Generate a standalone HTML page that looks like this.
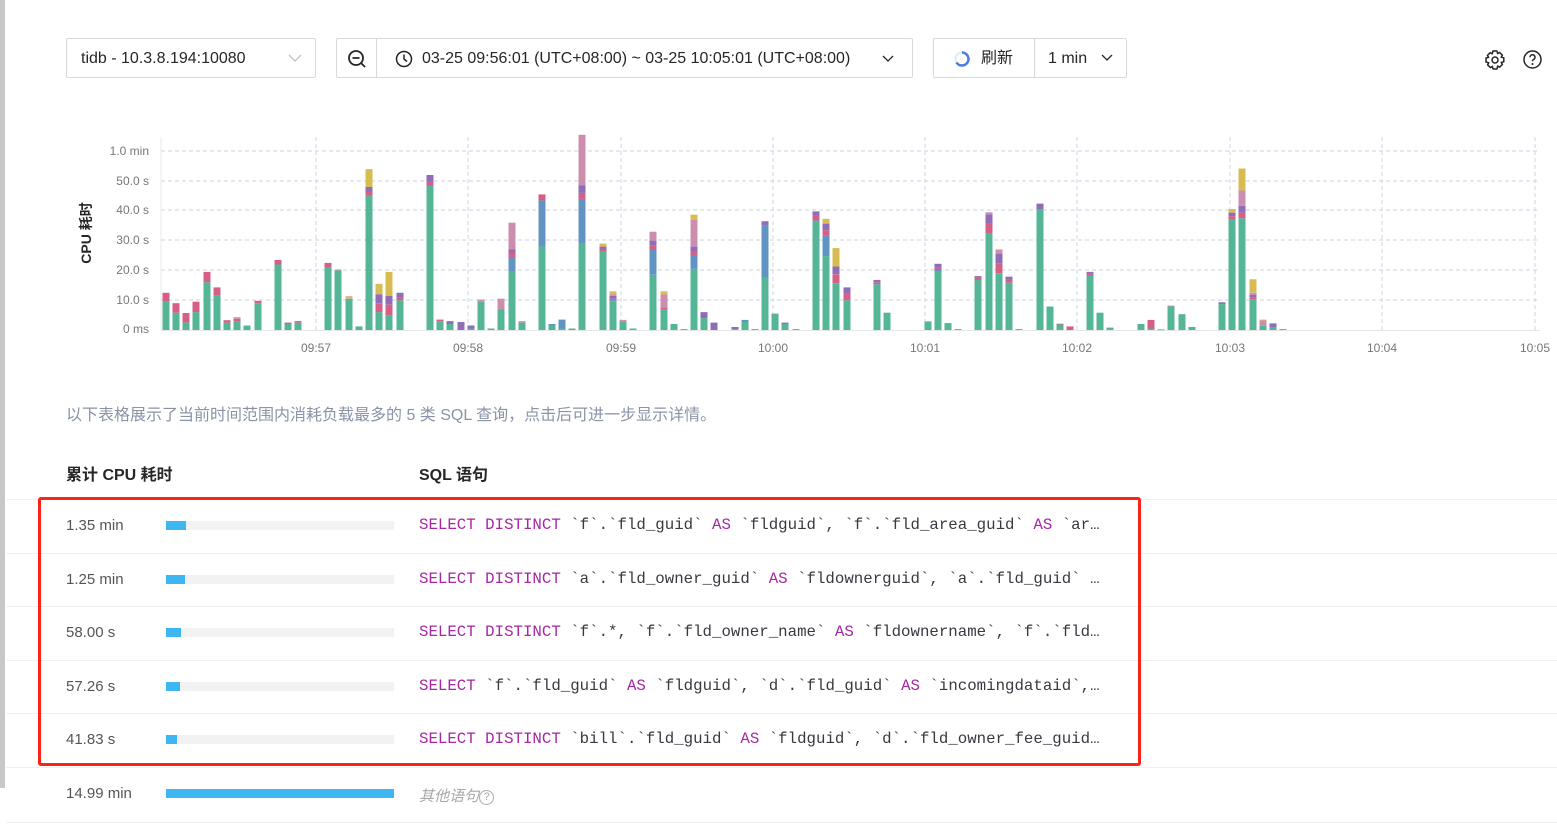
<!DOCTYPE html>
<html><head><meta charset="utf-8"><style>
*{box-sizing:border-box;margin:0;padding:0}
body{width:1557px;height:830px;overflow:hidden;background:#fff;font-family:"Liberation Sans","Noto Sans CJK SC",sans-serif;color:#262626;position:relative}
.abs{position:absolute}
.box{position:absolute;border:1px solid #d9d9d9;border-radius:2px;height:40px;top:38px;background:#fff}
.t16{font-size:16px;line-height:40px;white-space:nowrap}
.lbar{left:0;top:0;width:5px;height:788px;background:#c8c8c8}
.row{position:absolute;left:6px;right:0;height:1px;background:#f0f0f0}
.num{position:absolute;left:66px;font-size:15px;color:#555}
.track{position:absolute;left:166px;width:228px;height:9px;background:#f2f2f2}
.fill{height:9px;background:#3db6f2}
.sql{position:absolute;left:419px;font-family:"Liberation Mono",monospace;font-size:15.75px;color:#383a42;white-space:pre}
.k{color:#a626a4}
</style></head><body>
<div class="abs lbar"></div>

<div class="box" style="left:66px;width:250px">
 <span class="abs t16" style="left:14px;top:0">tidb - 10.3.8.194:10080</span>
 <svg class="abs" style="left:221px;top:14px" width="14" height="10"><path d="M1 2 L7 8 L13 2" fill="none" stroke="#bbb" stroke-width="1.2"/></svg>
</div>
<div class="box" style="left:336px;width:577px">
 <svg class="abs" style="left:9px;top:9px" width="22" height="22"><circle cx="10" cy="10" r="7" fill="none" stroke="#262626" stroke-width="1.8"/><path d="M6.5 10h7M15 15l4 4" stroke="#262626" stroke-width="1.8"/></svg>
 <div class="abs" style="left:39px;top:0;width:1px;height:38px;background:#d9d9d9"></div>
 <svg class="abs" style="left:58px;top:11px" width="18" height="18"><circle cx="9" cy="9" r="7.5" fill="none" stroke="#262626" stroke-width="1.5"/><path d="M9 4.5V9l3 2.5" fill="none" stroke="#262626" stroke-width="1.5"/></svg>
 <span class="abs t16" style="left:85px;top:0">03-25 09:56:01 (UTC+08:00) ~ 03-25 10:05:01 (UTC+08:00)</span>
 <svg class="abs" style="left:545px;top:15px" width="12" height="9"><path d="M1 2 L6 7 L11 2" fill="none" stroke="#262626" stroke-width="1.3"/></svg>
</div>
<div class="box" style="left:933px;width:194px">
 <svg class="abs" style="left:19px;top:11px" width="18" height="18"><circle cx="9" cy="9" r="6.5" fill="none" stroke="#e8ecf5" stroke-width="2.5"/><path d="M9 2.5A6.5 6.5 0 1 1 3.5 12.5" fill="none" stroke="#4a7de0" stroke-width="2.5"/></svg>
 <span class="abs t16" style="left:47px;top:0">刷新</span>
 <div class="abs" style="left:100px;top:0;width:1px;height:38px;background:#d9d9d9"></div>
 <span class="abs t16" style="left:114px;top:0">1 min</span>
 <svg class="abs" style="left:167px;top:14px" width="12" height="9"><path d="M1 2 L6 7 L11 2" fill="none" stroke="#262626" stroke-width="1.3"/></svg>
</div>
<svg class="abs" style="left:1484px;top:49px" width="22" height="22" viewBox="0 0 22 22"><path d="M9 2h4l.6 2.6 2-1.2 2.8 2.8-1.2 2 2.6.6v4l-2.6.6 1.2 2-2.8 2.8-2-1.2L13 20H9l-.6-2.6-2 1.2-2.8-2.8 1.2-2L2 13V9l2.6-.6-1.2-2 2.8-2.8 2 1.2z" fill="none" stroke="#262626" stroke-width="1.5" stroke-linejoin="round"/><circle cx="11" cy="11" r="3" fill="none" stroke="#262626" stroke-width="1.5"/></svg>
<svg class="abs" style="left:1522px;top:49px" width="21" height="21"><circle cx="10.5" cy="10.5" r="8.5" fill="none" stroke="#262626" stroke-width="1.5"/><path d="M8 8.2a2.5 2.5 0 1 1 3.5 2.3c-.8.4-1 .9-1 1.8" fill="none" stroke="#262626" stroke-width="1.5"/><circle cx="10.5" cy="15" r="1" fill="#262626"/></svg>

<svg class="abs" style="left:0;top:0" width="1557" height="370">
 <g stroke="#d6dbe8" stroke-dasharray="4 3" stroke-width="1.2">
  <line x1="161" x2="1540" y1="151" y2="151"/><line x1="161" x2="1540" y1="181" y2="181"/>
  <line x1="161" x2="1540" y1="210" y2="210"/><line x1="161" x2="1540" y1="240" y2="240"/>
  <line x1="161" x2="1540" y1="270" y2="270"/><line x1="161" x2="1540" y1="300" y2="300"/>
  <line x1="316" x2="316" y1="137" y2="330"/><line x1="468" x2="468" y1="137" y2="330"/>
  <line x1="621" x2="621" y1="137" y2="330"/><line x1="773" x2="773" y1="137" y2="330"/>
  <line x1="925" x2="925" y1="137" y2="330"/><line x1="1077" x2="1077" y1="137" y2="330"/>
  <line x1="1230" x2="1230" y1="137" y2="330"/><line x1="1382" x2="1382" y1="137" y2="330"/>
  <line x1="1535" x2="1535" y1="137" y2="330"/>
 </g>
 <line x1="161" x2="161" y1="137" y2="330" stroke="#e8e8e8"/>
 <line x1="161" x2="1540" y1="330.5" y2="330.5" stroke="#e6e6e6"/>
 <g id="bars"></g>
 <g font-family="Liberation Sans, sans-serif" font-size="12" fill="#777" text-anchor="end">
  <text x="149" y="155">1.0 min</text><text x="149" y="185">50.0 s</text><text x="149" y="214">40.0 s</text>
  <text x="149" y="244">30.0 s</text><text x="149" y="274">20.0 s</text><text x="149" y="304">10.0 s</text><text x="149" y="333">0 ms</text>
 </g>
 <g font-family="Liberation Sans, sans-serif" font-size="12" fill="#777" text-anchor="middle">
  <text x="316" y="352">09:57</text><text x="468" y="352">09:58</text><text x="621" y="352">09:59</text>
  <text x="773" y="352">10:00</text><text x="925" y="352">10:01</text><text x="1077" y="352">10:02</text>
  <text x="1230" y="352">10:03</text><text x="1382" y="352">10:04</text><text x="1535" y="352">10:05</text>
 </g>
 <text transform="translate(91,233) rotate(-90)" text-anchor="middle" font-family="Liberation Sans, Noto Sans CJK SC, sans-serif" font-size="14" font-weight="bold" fill="#262626">CPU 耗时</text>
</svg>

<div class="abs" style="left:66px;top:401px;font-size:16px;color:#8a93a6">以下表格展示了当前时间范围内消耗负载最多的 5 类 SQL 查询，点击后可进一步显示详情。</div>
<div class="abs" style="left:66px;top:461px;font-size:16px;font-weight:bold">累计 CPU 耗时</div>
<div class="abs" style="left:419px;top:461px;font-size:16px;font-weight:bold">SQL 语句</div>

<div class="row" style="top:499px"></div><div class="row" style="top:553px"></div>
<div class="row" style="top:606px"></div><div class="row" style="top:660px"></div>
<div class="row" style="top:713px"></div><div class="row" style="top:767px"></div>
<div class="row" style="top:822px"></div>

<div class="num" style="top:517px">1.35 min</div><div class="track" style="top:521px"><div class="fill" style="width:20px"></div></div>
<div class="sql" style="top:516px"><span class="k">SELECT DISTINCT</span> `f`.`fld_guid` <span class="k">AS</span> `fldguid`, `f`.`fld_area_guid` <span class="k">AS</span> `ar…</div>
<div class="num" style="top:571px">1.25 min</div><div class="track" style="top:575px"><div class="fill" style="width:19px"></div></div>
<div class="sql" style="top:570px"><span class="k">SELECT DISTINCT</span> `a`.`fld_owner_guid` <span class="k">AS</span> `fldownerguid`, `a`.`fld_guid` …</div>
<div class="num" style="top:624px">58.00 s</div><div class="track" style="top:628px"><div class="fill" style="width:15px"></div></div>
<div class="sql" style="top:623px"><span class="k">SELECT DISTINCT</span> `f`.*, `f`.`fld_owner_name` <span class="k">AS</span> `fldownername`, `f`.`fld…</div>
<div class="num" style="top:678px">57.26 s</div><div class="track" style="top:682px"><div class="fill" style="width:14px"></div></div>
<div class="sql" style="top:677px"><span class="k">SELECT</span> `f`.`fld_guid` <span class="k">AS</span> `fldguid`, `d`.`fld_guid` <span class="k">AS</span> `incomingdataid`,…</div>
<div class="num" style="top:731px">41.83 s</div><div class="track" style="top:735px"><div class="fill" style="width:11px"></div></div>
<div class="sql" style="top:730px"><span class="k">SELECT DISTINCT</span> `bill`.`fld_guid` <span class="k">AS</span> `fldguid`, `d`.`fld_owner_fee_guid…</div>
<div class="num" style="top:785px">14.99 min</div><div class="track" style="top:789px"><div class="fill" style="width:228px"></div></div>
<div class="abs" style="left:419px;top:785px;font-size:15px;font-style:italic;color:#a8a8a8">其他语句 <span style="display:inline-block;width:15px;height:15px;border:1px solid #aaa;border-radius:50%;font-size:11px;line-height:13px;text-align:center;font-style:normal;vertical-align:1px;margin-left:-4px">?</span></div>

<div class="abs" style="left:38px;top:497px;width:1103px;height:269px;border:3px solid #fb2316;border-radius:3px"></div>

<script>
var C={g:"#55b597",b:"#6194c2",r:"#d65f84",u:"#8f6db8",p:"#cc8eaf",y:"#d7bc52"};
var D=[[166,"g9.5 r12.5"],[176,"g5.8 r9"],[186,"g2.5 r5.7"],[196,"g6 r9.5"],[207,"g16 r19.5"],[217,"g11.5 r14.3"],[227,"g2.5 r3.3"],[237,"g3 r3.8 p4.3"],[247,"g1.5"],[258,"g9 r9.8"],[278,"g22 r23.5"],[288,"g2 r2.5"],[298,"g2.5 r3"],[328,"g21 r22.5"],[338,"g20 p20.3"],[349,"g10.5 y11 p11.3"],[359,"g1.2"],[369,"g45 r46.5 u48 y54"],[379,"g6 r9 u12 y15.5"],[389,"g5 r8.5 u11.5 y19.5"],[400,"g10 r11 u12.5"],[430,"g48.5 r50 u52"],[440,"g3 r3.5"],[450,"g2 u3"],[461,"u2.7"],[471,"g0.5 u1.5"],[481,"g9.5 p10.2"],[491,"g0.5"],[501,"g7 p10.5"],[512,"g19.5 b24.5 r26 u27 p36"],[522,"g2.5 p3"],[542,"g28 b43.5 r45.5"],[552,"g1.5 b2"],[562,"g0.5 b3.5"],[572,"g0.5"],[582,"g29 b44 r46 u48.5 p65.5"],[603,"g26.5 r27.2 u28 y29"],[613,"g9.5 b10 r10.5 u11.5 p12 y13"],[623,"g2.7 p3.4"],[633,"g0.5"],[653,"g18.5 b27 r28.5 u30 p33"],[664,"g7 r7.5 p12 y13"],[674,"g2"],[684,"g0.3"],[694,"g20.5 b25 r26.5 u28 p37 y38.7"],[704,"g4 u6"],[714,"u2.5"],[735,"g0.3 u1"],[745,"g2.7 b3.4"],[755,"g0.3"],[765,"g17.5 b35 u36.5"],[775,"g5.5"],[785,"g2 u2.5"],[796,"g0.3"],[816,"g36.3 b36.8 r38.3 u39.8"],[826,"g24.8 b31.8 r33.5 u35.7 y37.3"],[836,"g15.7 r18.7 u21.3 y27.5"],[847,"g10 r12.3 u14.3"],[877,"g15.4 r16 u16.8"],[887,"g5.8"],[928,"g2.9"],[938,"g19.5 b20.3 r21 u22.2"],[948,"g2.3"],[958,"g0.3"],[978,"g16.8 r17.5 u18.1"],[989,"g32.4 r35.6 u38.8 p39.5"],[999,"g19 r22.4 u25.5 p27"],[1009,"g15.9 r17 u17.9"],[1019,"g0.3"],[1040,"g40.6 u42.4"],[1050,"g7.9"],[1060,"g1.9 r2.1"],[1070,"r1.2"],[1090,"g18.3 r19 u19.5"],[1100,"g5.8"],[1110,"g0.8"],[1141,"g2"],[1151,"g0.5 r3.4"],[1161,"g0.2"],[1171,"g7.9 p8.2"],[1182,"g5.3"],[1192,"g1"],[1222,"g8.7 u9.3"],[1232,"g37.2 r38.2 u39.4 y40.6"],[1242,"g37.5 r39.4 u41.7 p46.9 y54.2"],[1253,"g10.3 r11 u11.8 p12.5 y17"],[1263,"g1.4 p3.3 y3.5"],[1273,"g1 u2 p2.3"],[1283,"g0.3"]];
var s="",K=2.98;
D.forEach(function(d){var prev=0;d[1].split(" ").forEach(function(t){var c=C[t[0]],v=parseFloat(t.slice(1));var y1=330-v*K,y0=330-prev*K;s+='<rect x="'+(d[0]-3.5)+'" y="'+y1.toFixed(1)+'" width="7" height="'+Math.max(0.8,(y0-y1)).toFixed(1)+'" fill="'+c+'"/>';prev=v;});});
document.getElementById("bars").innerHTML=s;
</script>
</body></html>
